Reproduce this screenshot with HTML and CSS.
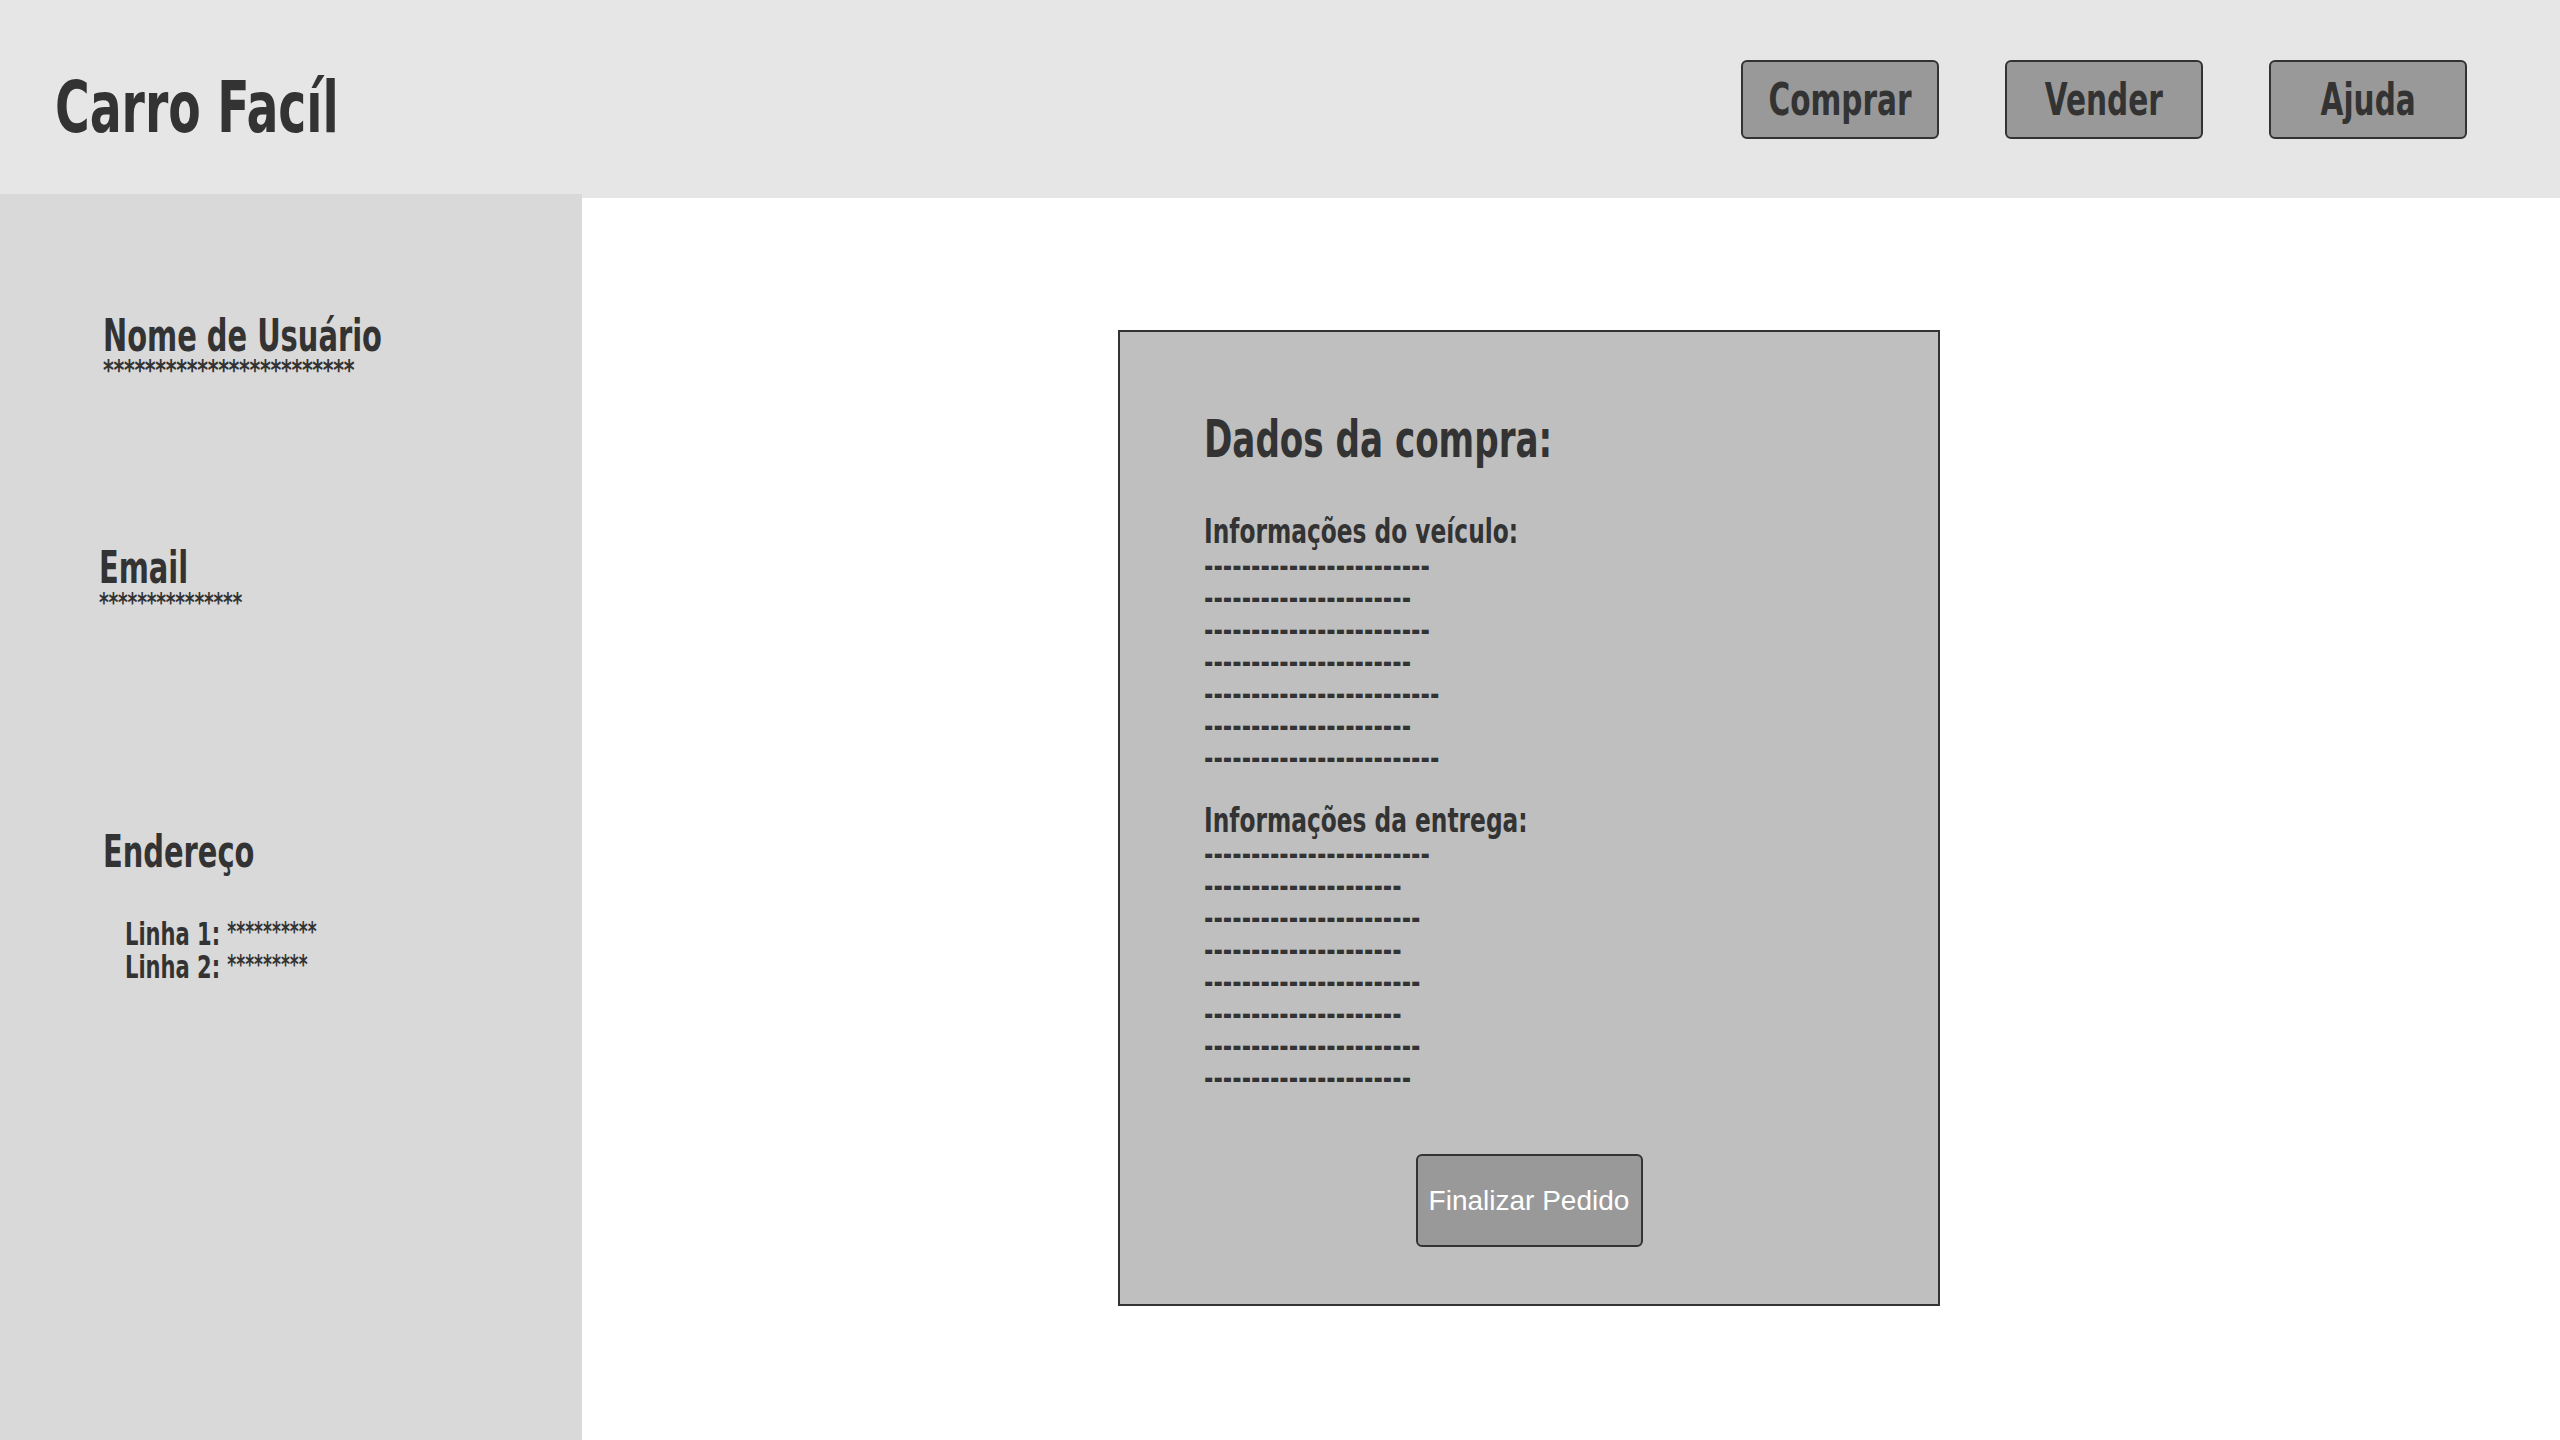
FILE: index.html
```html
<!DOCTYPE html>
<html lang="pt-BR">
<head>
<meta charset="utf-8">
<title>Carro Facíl</title>
<link rel="stylesheet" href="styles.css">
</head>
<body>
<header class="topbar">
  <h1 class="brand"><span class="sq">Carro Facíl</span></h1>
  <nav class="nav">
    <button class="nav-btn"><span class="sq sq-center">Comprar</span></button>
    <button class="nav-btn"><span class="sq sq-center">Vender</span></button>
    <button class="nav-btn"><span class="sq sq-center">Ajuda</span></button>
  </nav>
</header>
<div class="layout">
  <aside class="sidebar">
    <div class="field field-name">
      <div class="field-label"><span class="sq">Nome de Usuário</span></div>
      <div class="mask"><span class="sq sq-mask">************************</span></div>
    </div>
    <div class="field field-email">
      <div class="field-label"><span class="sq">Email</span></div>
      <div class="mask mask-sm"><span class="sq sq-mask">***************</span></div>
    </div>
    <div class="field field-address">
      <div class="field-label"><span class="sq">Endereço</span></div>
      <div class="address-lines">
        <div class="address-line"><span class="sq">Linha 1: <span class="mask-inline">**********</span></span></div>
        <div class="address-line"><span class="sq">Linha 2: <span class="mask-inline">*********</span></span></div>
      </div>
    </div>
  </aside>
  <main class="content">
    <section class="card">
      <h2 class="card-title"><span class="sq">Dados da compra:</span></h2>
      <h3 class="card-subtitle sub-vehicle"><span class="sq sq-sub">Informações do veículo:</span></h3>
      <div class="dash-list dash-vehicle">
        <div class="dash"><span class="sq sq-dash">------------------------</span></div>
        <div class="dash"><span class="sq sq-dash">----------------------</span></div>
        <div class="dash"><span class="sq sq-dash">------------------------</span></div>
        <div class="dash"><span class="sq sq-dash">----------------------</span></div>
        <div class="dash"><span class="sq sq-dash">-------------------------</span></div>
        <div class="dash"><span class="sq sq-dash">----------------------</span></div>
        <div class="dash"><span class="sq sq-dash">-------------------------</span></div>
      </div>
      <h3 class="card-subtitle sub-delivery"><span class="sq sq-sub">Informações da entrega:</span></h3>
      <div class="dash-list dash-delivery">
        <div class="dash"><span class="sq sq-dash">------------------------</span></div>
        <div class="dash"><span class="sq sq-dash">---------------------</span></div>
        <div class="dash"><span class="sq sq-dash">-----------------------</span></div>
        <div class="dash"><span class="sq sq-dash">---------------------</span></div>
        <div class="dash"><span class="sq sq-dash">-----------------------</span></div>
        <div class="dash"><span class="sq sq-dash">---------------------</span></div>
        <div class="dash"><span class="sq sq-dash">-----------------------</span></div>
        <div class="dash"><span class="sq sq-dash">----------------------</span></div>
      </div>
      <div class="card-actions">
        <button class="finish-btn">Finalizar Pedido</button>
      </div>
    </section>
  </main>
</div>
</body>
</html>
```
FILE: styles.css
```css
html, body {
  margin: 0;
  padding: 0;
}

body {
  width: 2560px;
  height: 1440px;
  display: flex;
  flex-direction: column;
  background: #ffffff;
  color: #333333;
  font-family: "DejaVu Sans Condensed", "DejaVu Sans", sans-serif;
  font-stretch: condensed;
  font-weight: 700;
  overflow: hidden;
}

/* condensed display lettering (heavy, narrow headline style) */
.sq {
  display: inline-block;
  white-space: nowrap;
  transform: scaleX(0.73);
  transform-origin: 0 50%;
}

.sq-center {
  transform-origin: 50% 50%;
}

.sq-sub {
  transform: scaleX(0.785);
}

.sq-mask {
  transform: scaleX(0.82);
}

.sq-dash {
  transform: scaleX(0.84);
}

/* ---------- top bar ---------- */
.topbar {
  height: 194px;
  flex: 0 0 194px;
  box-sizing: border-box;
  background: #e6e6e6;
  display: flex;
  justify-content: space-between;
  align-items: flex-start;
  padding: 0 93px 0 55px;
}

.brand {
  margin: 71px 0 0 0;
  font-size: 72px;
  line-height: 72px;
  font-weight: 700;
}

.nav {
  display: flex;
  gap: 66px;
  margin-top: 60px;
}

.nav-btn {
  width: 198px;
  height: 79px;
  box-sizing: border-box;
  background: #999999;
  border: 2px solid #333333;
  border-radius: 6px;
  color: #333333;
  font-family: inherit;
  font-weight: 700;
  font-size: 45px;
  line-height: 45px;
  padding: 0;
  display: flex;
  align-items: center;
  justify-content: center;
  overflow: visible;
}

/* ---------- layout ---------- */
.layout {
  flex: 1 1 auto;
  display: flex;
  min-height: 0;
}

.sidebar {
  width: 582px;
  flex: 0 0 582px;
  background: #d9d9d9;
  box-sizing: border-box;
  padding: 120px 0 0 99px;
}

.field-label {
  font-size: 44px;
  line-height: 44px;
}

.field-name,
.field-address {
  margin-left: 4px;
}

.field-email {
  margin-top: 164px;
}

.field-address {
  margin-top: 216px;
}

.mask {
  font-size: 28px;
  line-height: 26px;
  height: 24px;
  letter-spacing: -0.4px;
  white-space: nowrap;
}

.mask-sm {
  font-size: 26px;
  letter-spacing: -0.3px;
}

.mask-sm .sq-mask {
  transform: scaleX(0.8);
}

.address-lines {
  margin: 42px 0 0 22px;
}

.address-line {
  font-size: 32px;
  line-height: 33px;
  height: 33px;
}

.mask-inline {
  font-size: 26px;
  vertical-align: 4px;
}

/* ---------- content ---------- */
.content {
  flex: 1 1 auto;
  border-top: 4px solid #e6e6e6;
  box-sizing: border-box;
}

.card {
  margin: 132px 0 0 536px;
  width: 822px;
  height: 976px;
  box-sizing: border-box;
  background: #bfbfbf;
  border: 2px solid #333333;
  padding: 81px 0 0 84px;
}

.card-title {
  margin: 0;
  font-size: 52px;
  line-height: 52px;
  font-weight: 700;
}

.card-subtitle {
  margin: 0;
  font-size: 33px;
  line-height: 33px;
  font-weight: 700;
}

.sub-vehicle {
  margin-top: 50px;
}

.sub-delivery {
  margin-top: 29px;
}

.dash-vehicle {
  margin-top: 3px;
}

.dash-delivery {
  margin-top: 2px;
}

.dash {
  font-size: 30px;
  line-height: 32px;
  height: 32px;
  white-space: nowrap;
}

.card-actions {
  display: flex;
  justify-content: center;
  margin: 59px 0 0 -84px;
}

.finish-btn {
  width: 227px;
  height: 93px;
  box-sizing: border-box;
  background: #999999;
  border: 2px solid #333333;
  border-radius: 6px;
  color: #ffffff;
  font-family: "Liberation Sans", Arial, sans-serif;
  font-stretch: normal;
  font-weight: 400;
  font-size: 28px;
  padding: 0;
}
```
